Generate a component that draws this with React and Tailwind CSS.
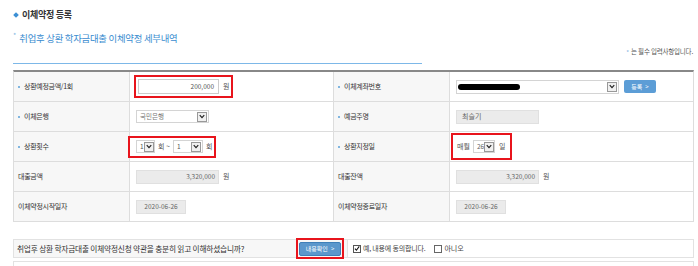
import React from "react";

const Chevron = () => (
  <svg viewBox="0 0 8 6" className="h-[5px] w-[6px]">
    <path d="M1 1.2 L4 4.4 L7 1.2" fill="none" stroke="#222" strokeWidth="1.6" />
  </svg>
);

const ArrowBox = () => (
  <span className="flex h-[10px] w-[10px] shrink-0 items-center justify-center border border-[#999] bg-[#f0f0f0]">
    <Chevron />
  </span>
);

const Select = ({ w, children, textCls = "text-[#777]" }) => (
  <div
    className={`flex h-[13px] items-center border border-[#d4d4d4] bg-white pl-[3px] pr-px ${w}`}
  >
    <span className={`flex-1 whitespace-nowrap text-[6.5px] leading-[11px] ${textCls}`}>{children}</span>
    <ArrowBox />
  </div>
);

const Bullet = () => <span className="mr-[4px] h-[2px] w-[2px] rounded-full bg-[#5aa0d8]" />;

const Label = ({ children, bullet }) => (
  <div className="flex items-center bg-[#f7f7f7] pl-[4px] text-[7px] text-[#333]">
    {bullet && <Bullet />}
    <span className="whitespace-nowrap tracking-[-0.3px]">{children}</span>
  </div>
);

const Value = ({ children, last }) => (
  <div className={`flex items-center gap-[4px] bg-white pl-[6px] text-[7px] text-[#555] ${last ? "" : "border-r border-[#ddd]"}`}>
    {children}
  </div>
);

const GrayInput = ({ w, align = "right", children }) => (
  <div
    className={`flex h-[14px] items-center whitespace-nowrap border border-[#e0e0e0] bg-[#ebebeb] px-[3px] text-[6.5px] text-[#666] ${w} ${
      align === "right" ? "justify-end" : align === "center" ? "justify-center" : "justify-start"
    }`}
  >
    {children}
  </div>
);

const Row = ({ children }) => (
  <div className="grid h-[30px] grid-cols-[116px_204px_116px_1fr] border-b border-[#ddd] [&>div:first-child]:border-r [&>div:first-child]:border-[#ddd] [&>div:nth-child(3)]:border-r [&>div:nth-child(3)]:border-[#ddd]">
    {children}
  </div>
);

export default function App() {
  return (
    <div className="h-[266px] w-[698px] overflow-hidden bg-white pl-[13px] pr-[4px] pt-[9px] font-['Noto_Sans_CJK_KR','Noto_Sans',sans-serif] text-[#333]">
      {/* title */}
      <div className="flex h-[12px] items-center">
        <span className="ml-[1px] mr-[4px] h-[4px] w-[4px] rotate-45 bg-[#3b8fd4]" />
        <span className="text-[9px] font-bold tracking-[-0.3px] text-[#333]">이체약정 등록</span>
      </div>
      {/* subtitle */}
      <div className="mt-[11px] flex h-[12px] items-center">
        <span className="mr-[3px] self-start text-[7px] leading-none text-[#7fb6e2]">*</span>
        <span className="whitespace-nowrap text-[9.4px] tracking-[-0.25px] text-[#3a8ccf]">취업후 상환 학자금대출 이체약정 세부내역</span>
      </div>
      {/* note */}
      <div className="mt-[3px] flex h-[10px] items-center justify-end pr-[1px]">
        <span className="mr-[2px] text-[6px] text-[#7fb6e2]">*</span>
        <span className="text-[6.5px] tracking-[-0.2px] text-[#555]">는 필수 입력사항입니다.</span>
      </div>
      {/* blue line */}
      <div className="mt-[6px] h-px w-[409px] bg-[#7db8e8]" />

      {/* table */}
      <div className="mt-[6px] border-l border-r border-t-2 border-[#ddd] border-t-[#888]">
        <Row>
          <Label bullet>상환예정금액/1회</Label>
          <Value>
            <div className="-ml-[2px] flex h-[23px] items-center gap-[4px] border-2 border-[#e8141c] pl-[2px] pr-[2px]">
              <div className="flex h-[15px] w-[81px] items-center justify-end border border-[#ccc] bg-white pr-[4px] text-[6.5px] text-[#555]">
                200,000
              </div>
              <span className="text-[7px] text-[#555]">원</span>
            </div>
          </Value>
          <Label bullet>이체계좌번호</Label>
          <Value last>
            <div className="flex h-[14px] w-[163px] items-center border border-[#d4d4d4] bg-white pl-[1px] pr-px">
              <span className="flex-1">
                <span className="block h-[6px] w-[62px] rounded-full bg-black" />
              </span>
              <ArrowBox />
            </div>
            <div className="ml-px flex h-[13px] w-[32px] items-center justify-center gap-[3px] rounded-[2px] bg-[#5c9dd6] text-[6px] text-white">
              <span>등록</span>
              <span className="text-[6px]">&gt;</span>
            </div>
          </Value>
        </Row>
        <Row>
          <Label bullet>이체은행</Label>
          <Value>
            <Select w="w-[73px]">국민은행</Select>
          </Value>
          <Label bullet>예금주명</Label>
          <Value last>
            <GrayInput w="w-[83px]" align="left">
              <span className="ml-[2px] text-[7px]">최슬기</span>
            </GrayInput>
          </Value>
        </Row>
        <Row>
          <Label bullet>상환횟수</Label>
          <Value>
            <div className="-ml-[8px] flex h-[22px] items-center gap-[3px] border-2 border-[#e8141c] pl-[6px] pr-[2px]">
              <Select w="w-[19px]" textCls="text-[#555]">1</Select>
              <span className="whitespace-nowrap text-[7px] text-[#555]">회 ~</span>
              <Select w="w-[30px]" textCls="text-[#555]">1</Select>
              <span className="text-[7px] text-[#555]">회</span>
            </div>
          </Value>
          <Label bullet>상환지정일</Label>
          <Value last>
            <div className="-ml-[5px] flex h-[27px] items-center gap-[3px] border-2 border-[#e8141c] pl-[4px] pr-[5px]">
              <span className="whitespace-nowrap text-[7px] text-[#555]">매월</span>
              <Select w="w-[22px]" textCls="text-[#666]">26</Select>
              <span className="ml-px text-[7px] text-[#555]">일</span>
            </div>
          </Value>
        </Row>
        <Row>
          <Label>대출금액</Label>
          <Value>
            <GrayInput w="w-[83px]">3,320,000</GrayInput>
            <span>원</span>
          </Value>
          <Label>대출잔액</Label>
          <Value last>
            <GrayInput w="w-[83px]">3,320,000</GrayInput>
            <span>원</span>
          </Value>
        </Row>
        <Row>
          <Label>이체약정시작일자</Label>
          <Value>
            <GrayInput w="w-[50px]" align="center">2020-06-26</GrayInput>
          </Value>
          <Label>이체약정종료일자</Label>
          <Value last>
            <GrayInput w="w-[50px]" align="center">2020-06-26</GrayInput>
          </Value>
        </Row>
      </div>

      {/* agreement */}
      <div className="mt-[17px] flex h-[19px] border border-[#e2e2e2]">
        <div className="flex w-[334px] items-center justify-between border-r border-[#e2e2e2] bg-[#f7f7f7] pl-[3px] pr-[3px]">
          <span className="whitespace-nowrap text-[7.7px] tracking-[-0.2px] text-[#333]">
            취업후 상환 학자금대출 이체약정신청 약관을 충분히 읽고 이해하셨습니까?
          </span>
          <div className="-my-[2px] flex h-[21px] items-center border-2 border-[#e8141c] px-px">
            <div className="flex h-[14px] w-[42px] items-center justify-center gap-[3px] rounded-[2px] border border-[#3f7fb8] bg-[#5b97cc] text-[6px] text-white">
              <span>내용확인</span>
              <span>&gt;</span>
            </div>
          </div>
        </div>
        <div className="flex flex-1 items-center pl-[5px] text-[7px] text-[#444]">
          <span className="flex h-[8px] w-[8px] items-center justify-center border border-[#555] bg-white">
            <svg viewBox="0 0 8 8" className="h-[7px] w-[7px]">
              <path d="M1.2 4.2 L3.2 6.3 L7 1.2" fill="none" stroke="#111" strokeWidth="1.4" />
            </svg>
          </span>
          <span className="ml-[2px] whitespace-nowrap tracking-[-0.2px]">예, 내용에 동의합니다.</span>
          <span className="ml-[9px] h-[8px] w-[8px] border border-[#666] bg-white" />
          <span className="ml-[2px]">아니오</span>
        </div>
      </div>
      <div className="mt-[3px] h-[10px] border-l border-r border-t border-[#e2e2e2]" />
    </div>
  );
}
